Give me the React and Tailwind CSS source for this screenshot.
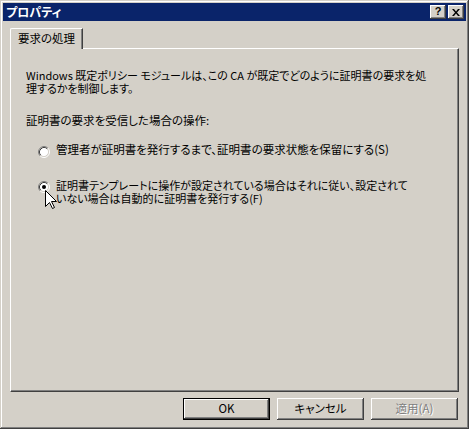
import React from 'react';

const Radio = ({ checked }) => (
  <svg width="12" height="12" viewBox="0 0 12 12" className="shrink-0">
    <circle cx="6" cy="6" r="4.5" fill="#fff" />
    <path d="M2.11 9.89 A5.5 5.5 0 0 1 9.89 2.11" fill="none" stroke="#808080" />
    <path d="M9.89 2.11 A5.5 5.5 0 0 1 2.11 9.89" fill="none" stroke="#fff" />
    <path d="M2.82 9.18 A4.5 4.5 0 0 1 9.18 2.82" fill="none" stroke="#404040" />
    <path d="M9.18 2.82 A4.5 4.5 0 0 1 2.82 9.18" fill="none" stroke="#d4d0c8" />
    {checked && <circle cx="6" cy="6" r="2" fill="#000" />}
  </svg>
);

const bevel =
  'bg-[#d4d0c8] shadow-[inset_-1px_-1px_0_#404040,inset_1px_1px_0_#fff,inset_-2px_-2px_0_#808080]';

const App = () => {
  return (
    <div
      className="relative w-[469px] h-[429px] bg-[#d4d0c8] p-[3px] flex flex-col text-black shadow-[inset_-1px_-1px_0_#404040,inset_1px_1px_0_#d4d0c8,inset_-2px_-2px_0_#808080,inset_2px_2px_0_#fff] [font-feature-settings:'palt']"
      style={{ fontFamily: '"Noto Sans CJK JP", "Liberation Sans", sans-serif' }}
    >
      {/* title bar */}
      <div className="h-[18px] bg-[#0a246a] flex items-center justify-between pl-[3px] pr-[2px]">
        <span className="text-white font-bold text-[12px] leading-[14px]">プロパティ</span>
        <div className="flex gap-[2px]">
          <div className={`w-[16px] h-[14px] flex items-center justify-center ${bevel}`}>
            <span className="font-bold text-[11px] leading-none font-['Liberation_Sans'] -mt-[1px]">?</span>
          </div>
          <div className={`w-[16px] h-[14px] flex items-center justify-center ${bevel}`}>
            <svg width="8" height="7" viewBox="0 0 8 7">
              <path d="M0 0h2l2 2.5 2-2.5h2l-3 3.5 3 3.5h-2l-2-2.5-2 2.5h-2l3-3.5z" fill="#000" />
            </svg>
          </div>
        </div>
      </div>

      {/* body */}
      <div className="flex-1 flex flex-col px-[7px] pt-[7px]">
        <div className="flex">
          <div className="relative z-10 -mb-[1px] h-[21px] w-[73px] bg-[#d4d0c8] border-l border-t border-white rounded-tl-[2px] shadow-[inset_-1px_0_0_#808080] border-r border-r-[#404040] pl-[7px] pt-[2px] text-[11.5px] leading-[14px]">
            要求の処理
          </div>
        </div>
        <div className="h-[344px] border-t border-l border-white border-r border-b border-r-[#404040] border-b-[#404040] shadow-[inset_-1px_-1px_0_#808080] pl-[15px] pt-[20px] text-[11.5px] leading-[13px]">
          <p className="whitespace-nowrap text-[11px]">
            Windows 既定ポリシー モジュールは、この CA が既定でどのように証明書の要求を処
            <br />
            理するかを制御します。
          </p>
          <p className="mt-[19px] whitespace-nowrap">証明書の要求を受信した場合の操作:</p>

          <div className="mt-[16px] ml-[12px] flex items-start gap-[6px]">
            <div className="mt-[3px]">
              <Radio />
            </div>
            <span className="whitespace-nowrap">管理者が証明書を発行するまで、証明書の要求状態を保留にする(S)</span>
          </div>

          <div className="mt-[21px] ml-[12px] flex items-start gap-[6px]">
            <div className="mt-[2px]">
              <Radio checked />
            </div>
            <span className="whitespace-nowrap text-[11px]">
              証明書テンプレートに操作が設定されている場合はそれに従い、設定されて
              <br />
              いない場合は自動的に証明書を発行する(F)
            </span>
          </div>
        </div>

        {/* buttons */}
        <div className="mt-[6px] flex justify-end gap-[7px] pr-[1px] text-[11.5px]">
          <button className="w-[87px] h-[22px] border border-black bg-[#d4d0c8] shadow-[inset_-1px_-1px_0_#404040,inset_1px_1px_0_#fff,inset_-2px_-2px_0_#808080] leading-none">
            OK
          </button>
          <button className={`w-[87px] h-[22px] leading-none ${bevel}`}>キャンセル</button>
          <button
            className={`w-[87px] h-[22px] leading-none text-[#808080] [text-shadow:1px_1px_0_#fff] ${bevel}`}
          >
            適用(A)
          </button>
        </div>
      </div>

      {/* mouse cursor */}
      <svg
        className="absolute left-[45px] top-[190px]"
        width="13"
        height="20"
        viewBox="0 0 13 20"
      >
        <path
          d="M0.5 0.5 L0.5 16.5 L4.5 12.5 L7.5 18.5 L9.5 17.5 L6.5 11.5 L11.5 11.5 Z"
          fill="#fff"
          stroke="#000"
          strokeLinejoin="miter"
        />
      </svg>
    </div>
  );
};

export default App;
